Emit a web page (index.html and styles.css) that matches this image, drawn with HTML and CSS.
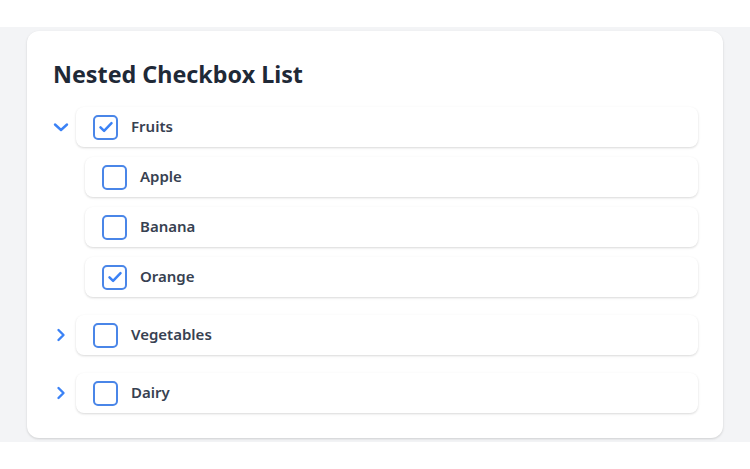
FILE: index.html
```html
<!DOCTYPE html>
<html lang="en">
<head>
    <meta charset="UTF-8">
    <meta name="viewport" content="width=device-width, initial-scale=1.0">
    <title>Nested Checkbox List</title>
    <link rel="stylesheet" href="styles.css">
</head>
<body>
    <div class="page">
        <div class="card">
            <h1>Nested Checkbox List</h1>

            <ul class="tree">
                <li class="item">
                    <div class="item-head">
                        <span class="toggle">
                            <svg width="16" height="16" viewBox="0 0 16 16"><path d="M2 5.5l6 5.5 6-5.5" fill="none" stroke="#3b82f6" stroke-width="2.4" stroke-linecap="round" stroke-linejoin="round"/></svg>
                        </span>
                        <label class="row">
                            <span class="box checked">
                                <svg width="16" height="16" viewBox="0 0 16 16"><path d="M2.5 8.3l3.6 3.5 7.4-7.6" fill="none" stroke="#3b82f6" stroke-width="2.5" stroke-linecap="round" stroke-linejoin="round"/></svg>
                            </span>
                            <span class="label">Fruits</span>
                        </label>
                    </div>
                    <ul class="children">
                        <li>
                            <label class="row">
                                <span class="box"></span>
                                <span class="label">Apple</span>
                            </label>
                        </li>
                        <li>
                            <label class="row">
                                <span class="box"></span>
                                <span class="label">Banana</span>
                            </label>
                        </li>
                        <li>
                            <label class="row">
                                <span class="box checked">
                                    <svg width="16" height="16" viewBox="0 0 16 16"><path d="M2.5 8.3l3.6 3.5 7.4-7.6" fill="none" stroke="#3b82f6" stroke-width="2.5" stroke-linecap="round" stroke-linejoin="round"/></svg>
                                </span>
                                <span class="label">Orange</span>
                            </label>
                        </li>
                    </ul>
                </li>

                <li class="item">
                    <div class="item-head">
                        <span class="toggle">
                            <svg width="16" height="16" viewBox="0 0 16 16"><path d="M5.5 3l5 5-5 5" fill="none" stroke="#3b82f6" stroke-width="2.4" stroke-linecap="round" stroke-linejoin="round"/></svg>
                        </span>
                        <label class="row">
                            <span class="box"></span>
                            <span class="label">Vegetables</span>
                        </label>
                    </div>
                </li>

                <li class="item">
                    <div class="item-head">
                        <span class="toggle">
                            <svg width="16" height="16" viewBox="0 0 16 16"><path d="M5.5 3l5 5-5 5" fill="none" stroke="#3b82f6" stroke-width="2.4" stroke-linecap="round" stroke-linejoin="round"/></svg>
                        </span>
                        <label class="row">
                            <span class="box"></span>
                            <span class="label">Dairy</span>
                        </label>
                    </div>
                </li>
            </ul>
        </div>
    </div>
</body>
</html>
```

FILE: styles.css
```css
body {
    margin: 0;
    background: #fff;
    font-family: "Noto Sans", "Open Sans", Arial, sans-serif;
    color: #374151;
}
.page {
    margin-top: 27px;
    background: #f3f4f6;
    padding: 4px 27px;
}
.card {
    background: #fff;
    border-radius: 12px;
    padding: 24px 25px 25px 26px;
    box-shadow: 0 1px 3px rgba(0,0,0,0.1), 0 1px 2px rgba(0,0,0,0.06);
}
h1 {
    margin: 0 0 14px;
    font-size: 23.3px;
    line-height: 38px;
    font-weight: 700;
    color: #1f2937;
}
ul {
    list-style: none;
    margin: 0;
    padding: 0;
}
.item {
    margin-bottom: 18px;
}
.item:last-child {
    margin-bottom: 0;
}
.item-head {
    display: flex;
    align-items: center;
}
.toggle {
    width: 16px;
    height: 16px;
    margin-right: 7px;
    display: flex;
    align-items: center;
    justify-content: center;
}
.row {
    flex: 1;
    display: flex;
    align-items: center;
    height: 40px;
    padding: 0 17px;
    background: #fff;
    border-radius: 8px;
    box-shadow: 0 1px 3px rgba(0,0,0,0.1), 0 1px 2px rgba(0,0,0,0.06);
}
.children {
    padding-left: 32px;
    margin-top: 10px;
}
.children li {
    margin-bottom: 10px;
}
.children li:last-child {
    margin-bottom: 0;
}
.box {
    width: 21px;
    height: 21px;
    border: 2px solid #4a86e8;
    border-radius: 5px;
    display: flex;
    align-items: center;
    justify-content: center;
    margin-right: 13px;
    flex-shrink: 0;
}
.label {
    font-size: 15px;
    font-weight: 600;
    color: #374151;
    padding-bottom: 2px;
}
```
